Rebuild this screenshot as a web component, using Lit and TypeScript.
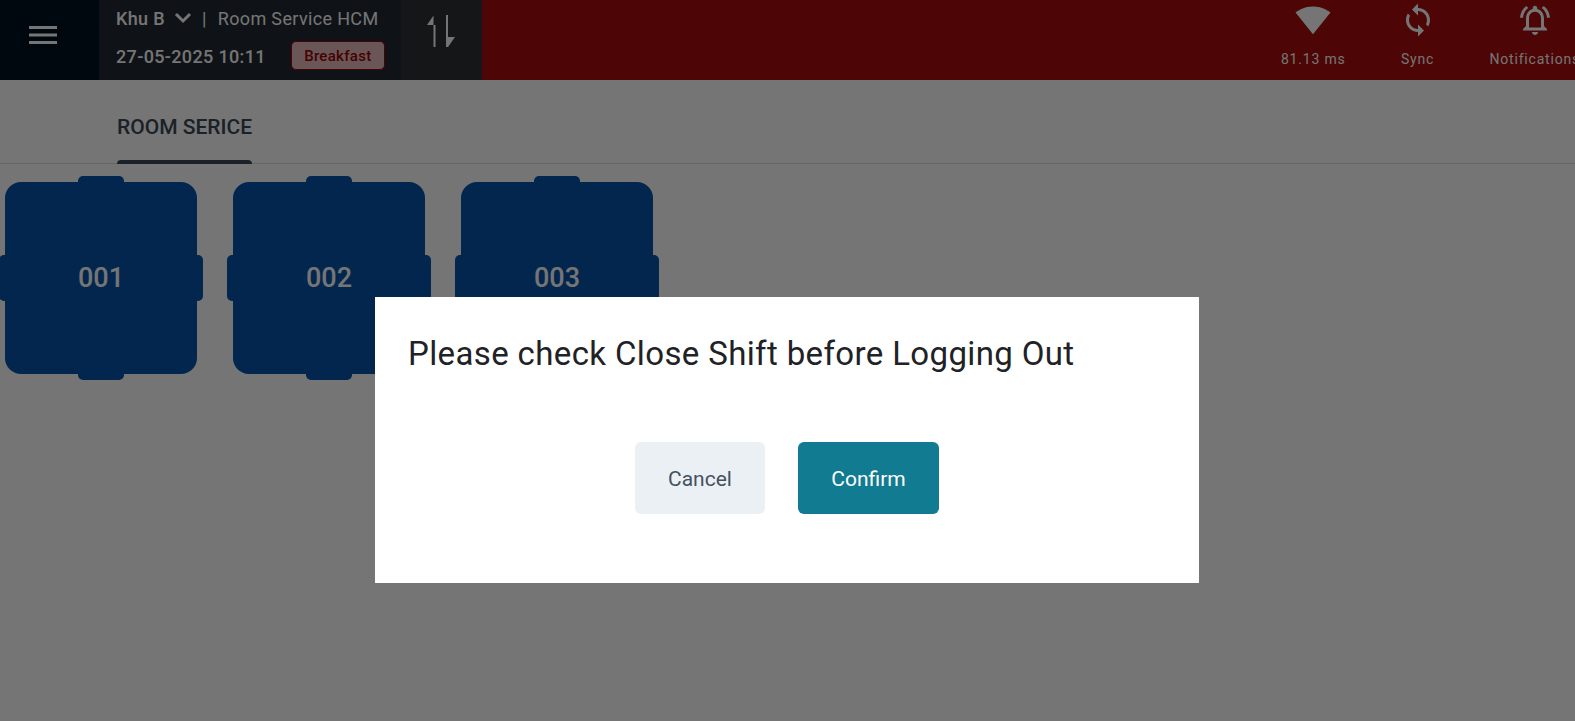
import { LitElement, html, css } from "lit";
import { customElement } from "lit/decorators.js";

@customElement("app-root")
export class AppRoot extends LitElement {
  static styles = css`
    :host { display: block; position: relative; width: 100%; height: 721px; overflow: hidden; background: #fff; font-family: Roboto, "Liberation Sans", sans-serif; }
    .header { display: flex; height: 80px; background: #a80b0b; color: #fff; }
    .menu { width: 99px; flex: none; box-sizing: border-box; background: #001322; padding: 26px 0 0 29px; }
    .menu svg { width: 28px; height: 18px; display: block; }
    .info { width: 302px; flex: none; box-sizing: border-box; background: #212830; padding: 7px 0 0 17px; }
    .row1 { display: flex; align-items: center; height: 22px; font-size: 18px; letter-spacing: .35px; }
    .row1 b { font-weight: 500; }
    .row1 svg { width: 18px; height: 12px; margin: 0 10px 0 9px; }
    .row1 .sep { margin-right: 11px; }
    .row2 { display: flex; align-items: center; margin-top: 12px; font-size: 18px; font-weight: 500; letter-spacing: .35px; }
    .date { margin-top: 2px; }
    .badge { margin-left: 25px; box-sizing: border-box; width: 94px; height: 29px; padding-top: 1px; border: 1px solid #a00808; border-radius: 5px; background: #e8bcbc; color: #950505; font-size: 15px; font-weight: 500; letter-spacing: .3px; display: flex; align-items: center; justify-content: center; }
    .swap { width: 81px; flex: none; background: #2f3135; }
    .swap svg { display: block; width: 81px; height: 80px; }
    .right { margin-left: auto; margin-right: -5px; display: flex; gap: 54px; }
    .stat { display: flex; flex-direction: column; align-items: center; font-size: 14px; letter-spacing: .8px; }
    .stat svg { width: 36px; height: 36px; margin-top: 2px; fill: #fff; display: block; }
    .stat span { margin-top: 11px; line-height: 20px; white-space: nowrap; }
    .tabs { height: 84px; box-sizing: border-box; border-bottom: 1px solid #dcdce0; padding-left: 117px; }
    .tab { position: relative; display: inline-flex; align-items: center; box-sizing: border-box; height: 84px; font-size: 21px; font-weight: 500; color: #3c4858; padding-top: 9px; }
    .tab::after { content: ""; position: absolute; left: 0; right: 0; bottom: 0; height: 4px; background: #3c4858; border-radius: 4px 4px 0 0; }
    .tables { display: flex; gap: 36px; padding: 18px 0 0 5px; }
    .table { position: relative; width: 192px; height: 192px; border-radius: 16px; background: #0653a8; color: #fff; display: flex; align-items: center; justify-content: center; font-size: 27px; font-weight: 500; box-sizing: border-box; }
    .chair { position: absolute; background: #0653a8; border-radius: 5px; }
    .t, .b { width: 46px; height: 12px; left: 73px; }
    .t { top: -6px; } .b { bottom: -6px; }
    .l, .r { width: 12px; height: 46px; top: 73px; }
    .l { left: -6px; } .r { right: -6px; }
    .num { position: relative; }
    .overlay { position: absolute; inset: 0; background: rgba(0, 0, 0, .54); }
    .dialog { position: absolute; left: 375px; top: 297px; width: 824px; height: 286px; box-sizing: border-box; background: #fff; padding: 33px 33px 0; }
    .dialog h2 { margin: 0; font-size: 33px; line-height: 48px; font-weight: 400; letter-spacing: .37px; color: #212226; }
    .actions { display: flex; justify-content: center; gap: 33px; margin-top: 64px; }
    .btn { height: 72px; border-radius: 6px; display: flex; align-items: center; justify-content: center; font-size: 21px; padding-top: 1px; box-sizing: border-box; }
    .cancel { width: 130px; background: #ebf0f5; color: #475060; }
    .confirm { width: 141px; background: #107b91; color: #fff; }
  `;

  render() {
    return html`
      <div class="header">
        <div class="menu"><svg viewBox="0 0 28 18"><path d="M0 0h28v3H0zM0 7.500h28v3H0zM0 15h28v3H0z" fill="#fff"/></svg></div>
        <div class="info">
          <div class="row1"><b>Khu B</b><svg viewBox="0 0 18 12"><path d="M2 2l7 7 7-7" fill="none" stroke="#fff" stroke-width="3"/></svg><span class="sep">|</span><span>Room Service HCM</span></div>
          <div class="row2"><span class="date">27-05-2025 10:11</span><div class="badge">Breakfast</div></div>
        </div>
        <div class="swap"><svg viewBox="0 0 81 80"><path d="M26 25L32.500 15.500V47h2V25zM45 15h2v22h7l-7 10h-2z" fill="#fff"/></svg></div>
        <div class="right">
          <div class="stat"><svg viewBox="0 0 24 24"><path d="M12.010 21.490L23.640 7c-.45-.34-4.930-4-11.640-4C5.280 3 .81 6.660.36 7l11.630 14.490.01.01.01-.01z"/></svg><span>81.13 ms</span></div>
          <div class="stat"><svg viewBox="0 0 24 24"><path d="M12 4V1L8 5l4 4V6c3.310 0 6 2.690 6 6 0 1.010-.25 1.970-.7 2.800l1.460 1.460C19.540 15.030 20 13.570 20 12c0-4.420-3.580-8-8-8zm0 14c-3.310 0-6-2.690-6-6 0-1.010.25-1.970.7-2.800L5.240 7.740C4.460 8.970 4 10.430 4 12c0 4.420 3.580 8 8 8v3l4-4-4-4v3z"/></svg><span>Sync</span></div>
          <div class="stat"><svg viewBox="0 0 24 24"><path d="M12 22c1.100 0 2-.9 2-2h-4c0 1.100.9 2 2 2zm6-6v-5c0-3.070-1.630-5.640-4.500-6.320V4c0-.83-.67-1.500-1.500-1.500s-1.500.67-1.500 1.500v.68C7.640 5.360 6 7.920 6 11v5l-2 2v1h16v-1l-2-2zm-2 1H8v-6c0-2.480 1.510-4.500 4-4.500s4 2.020 4 4.500v6zM7.580 4.080L6.150 2.650C3.750 4.480 2.170 7.300 2.030 10.500h2c.15-2.650 1.510-4.970 3.550-6.420zm12.390 6.420h2c-.15-3.200-1.730-6.020-4.120-7.850l-1.420 1.430c2.020 1.450 3.390 3.770 3.540 6.420z"/></svg><span>Notifications</span></div>
        </div>
      </div>
      <div class="tabs"><div class="tab">ROOM SERICE</div></div>
      <div class="tables">
        ${["001", "002", "003"].map(n => html`
          <div class="table">
            <i class="chair t"></i><i class="chair b"></i><i class="chair l"></i><i class="chair r"></i>
            <span class="num">${n}</span>
          </div>`)}
      </div>
      <div class="overlay"></div>
      <div class="dialog">
        <h2>Please check Close Shift before Logging Out</h2>
        <div class="actions">
          <div class="btn cancel">Cancel</div>
          <div class="btn confirm">Confirm</div>
        </div>
      </div>
    `;
  }
}
